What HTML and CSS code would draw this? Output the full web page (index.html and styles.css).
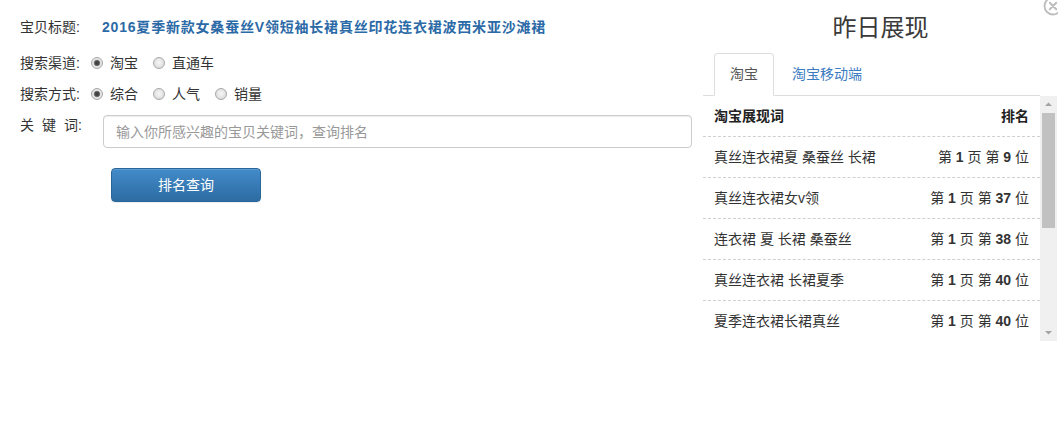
FILE: index.html
```html
<!DOCTYPE html>
<html lang="zh-CN">
<head>
<meta charset="utf-8">
<title>排名查询</title>
<link rel="stylesheet" href="styles.css">
</head>
<body>
<div class="page">
  <div class="form">
    <div class="row r1">
      <span class="label">宝贝标题:</span>
      <a class="title" href="#">2016夏季新款女桑蚕丝V领短袖长裙真丝印花连衣裙波西米亚沙滩裙</a>
    </div>
    <div class="row r2">
      <span class="label">搜索渠道:</span>
      <span class="opt"><i class="radio on"></i>淘宝</span>
      <span class="opt"><i class="radio"></i>直通车</span>
    </div>
    <div class="row r3">
      <span class="label">搜索方式:</span>
      <span class="opt"><i class="radio on"></i>综合</span>
      <span class="opt"><i class="radio"></i>人气</span>
      <span class="opt"><i class="radio"></i>销量</span>
    </div>
    <div class="row r4">
      <span class="label"><span class="sp">关键</span>词:</span>
      <input class="kw" type="text" placeholder="输入你所感兴趣的宝贝关键词，查询排名">
    </div>
    <div class="row r5">
      <button class="btn" type="button">排名查询</button>
    </div>
  </div>

  <div class="panel">
    <a class="close" href="#" aria-label="关闭">
      <svg width="20" height="20" viewBox="0 0 20 20">
        <circle cx="10" cy="10" r="8.5" fill="#fff" stroke="#bdbdbd" stroke-width="1.8"/>
        <path d="M6.8 6.8 L13.2 13.2 M13.2 6.8 L6.8 13.2" stroke="#bdbdbd" stroke-width="2" stroke-linecap="round"/>
      </svg>
    </a>
    <h2 class="ptitle">昨日展现</h2>
    <ul class="tabs">
      <li class="tab active">淘宝</li>
      <li class="tab">淘宝移动端</li>
    </ul>
    <div class="scrollbox">
      <div class="list">
        <div class="lrow head"><span>淘宝展现词</span><span>排名</span></div>
        <div class="lrow"><span>真丝连衣裙夏 桑蚕丝 长裙</span><span class="rank">第 <b>1</b> 页 第 <b>9</b> 位</span></div>
        <div class="lrow"><span>真丝连衣裙女v领</span><span class="rank">第 <b>1</b> 页 第 <b>37</b> 位</span></div>
        <div class="lrow"><span>连衣裙 夏 长裙 桑蚕丝</span><span class="rank">第 <b>1</b> 页 第 <b>38</b> 位</span></div>
        <div class="lrow"><span>真丝连衣裙 长裙夏季</span><span class="rank">第 <b>1</b> 页 第 <b>40</b> 位</span></div>
        <div class="lrow"><span>夏季连衣裙长裙真丝</span><span class="rank">第 <b>1</b> 页 第 <b>40</b> 位</span></div>
      </div>
      <div class="sbar">
        <div class="sb-btn">
          <svg width="17" height="17" viewBox="0 0 17 17"><path d="M5 10 L8.5 6.5 L12 10 Z" fill="#a3a3a3"/></svg>
        </div>
        <div class="sb-thumb"></div>
        <div class="sb-track"></div>
        <div class="sb-btn">
          <svg width="17" height="17" viewBox="0 0 17 17"><path d="M5 7 L12 7 L8.5 10.5 Z" fill="#a3a3a3"/></svg>
        </div>
      </div>
    </div>
  </div>
</div>
</body>
</html>
```

FILE: styles.css
```css
html, body {
  margin: 0;
  padding: 0;
  background: #fff;
  overflow: hidden;
}
body {
  font-family: "Liberation Sans", "Noto Sans CJK SC", sans-serif;
  font-size: 14px;
  line-height: 20px;
  color: #333;
}
.page {
  display: flex;
  width: 1058px;
  height: 431px;
}

/* left form */
.form {
  width: 703px;
  box-sizing: border-box;
  padding: 17px 11px 0 20px;
  display: flex;
  flex-direction: column;
}
.row {
  display: flex;
  align-items: center;
}
.r2 { margin-top: 16px; }
.r3 { margin-top: 11px; }
.r4 { margin-top: 11px; align-items: flex-start; }
.r5 { margin-top: 20px; padding-left: 91px; }
.label {
  width: 71px;
  flex: none;
  color: #333;
}
.sp { letter-spacing: 8px; }
.title {
  margin-left: 11px;
  color: #2b6aa6;
  font-weight: bold;
  letter-spacing: 0.8px;
  text-decoration: none;
}
.opt {
  display: inline-flex;
  align-items: center;
  margin-right: 15px;
}
.radio {
  display: inline-block;
  width: 12px;
  height: 12px;
  box-sizing: border-box;
  border-radius: 50%;
  border: 1px solid #a8a8a8;
  background: radial-gradient(circle at 50% 45%, #f6f6f6 0, #e2e2e2 60%, #cfcfcf 100%);
  margin-right: 7px;
}
.radio.on {
  background: radial-gradient(circle at 50% 50%, #3c3c3c 0, #4a4a4a 2px, #8a8a8a 3px, #e8e8e8 3.6px, #d6d6d6 100%);
}
.kw {
  margin-left: 12px;
  width: 590px;
  height: 33px;
  box-sizing: border-box;
  border: 1px solid #ccc;
  border-radius: 4px;
  padding: 0 12px;
  font-family: "Liberation Sans", "Noto Sans CJK SC", sans-serif;
  font-size: 14px;
  color: #555;
  box-shadow: inset 0 1px 1px rgba(0, 0, 0, 0.075);
  outline: none;
}
.kw::placeholder { color: #999; }
.btn {
  width: 150px;
  height: 34px;
  border: 1px solid #2b669a;
  border-radius: 4px;
  background: linear-gradient(#428bca, #2d6ca2);
  color: #fff;
  font-family: "Liberation Sans", "Noto Sans CJK SC", sans-serif;
  font-size: 14px;
  line-height: 20px;
  padding: 0;
  box-shadow: inset 0 1px 0 rgba(255, 255, 255, 0.15), 0 1px 1px rgba(0, 0, 0, 0.075);
}

/* right panel */
.panel {
  position: relative;
  width: 355px;
  display: flex;
  flex-direction: column;
}
.close {
  position: absolute;
  right: -5px;
  top: -4px;
  width: 20px;
  height: 20px;
  display: block;
}
.close svg { display: block; }
.ptitle {
  margin: 12px 0 0;
  font-size: 24px;
  line-height: 32px;
  font-weight: normal;
  text-align: center;
  color: #3a3a3a;
}
.tabs {
  list-style: none;
  margin: 9px 18px 0 0;
  padding: 0 0 0 11px;
  display: flex;
  border-bottom: 1px solid #ddd;
}
.tab {
  padding: 10px 15px 11px;
  margin-right: 2px;
  margin-bottom: -1px;
  border: 1px solid transparent;
  border-radius: 4px 4px 0 0;
  color: #3b7bbf;
}
.tab.active {
  color: #555;
  background: #fff;
  border-color: #ddd #ddd transparent;
}
.scrollbox {
  display: flex;
  height: 245px;
}
.list {
  flex: 1;
  overflow: hidden;
}
.lrow {
  height: 40px;
  display: flex;
  align-items: center;
  justify-content: space-between;
  padding: 0 11px;
  border-bottom: 1px dashed #d0d0d0;
}
.lrow.head { font-weight: bold; color: #222; }
.rank b { font-weight: bold; color: #333; }
.sbar {
  width: 17px;
  margin-right: 1px;
  background: #f0f0f0;
  display: flex;
  flex-direction: column;
}
.sb-btn { height: 17px; flex: none; }
.sb-btn svg { display: block; }
.sb-thumb {
  height: 115px;
  margin: 0 2px;
  background: #c1c1c1;
  flex: none;
}
.sb-track { flex: 1; }
```
